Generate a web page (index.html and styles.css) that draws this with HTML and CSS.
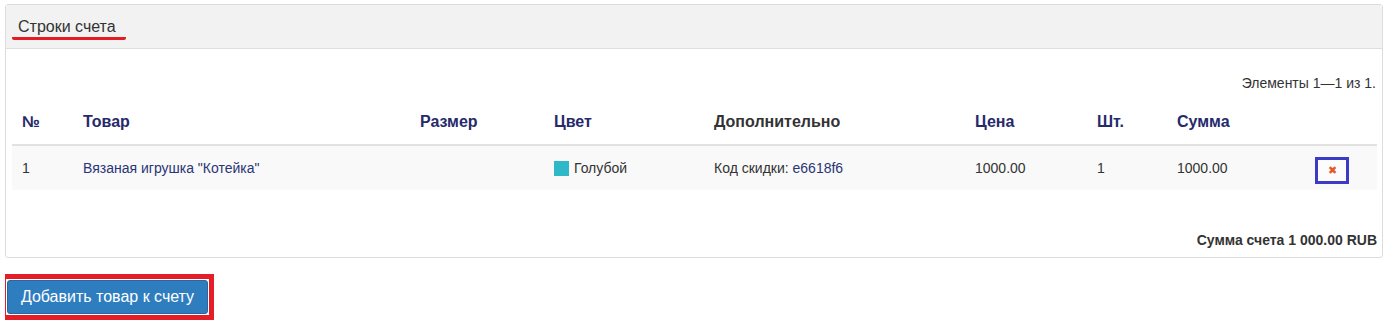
FILE: index.html
```html
<!DOCTYPE html>
<html lang="ru">
<head>
  <meta charset="UTF-8" />
  <title>Строки счета</title>
  <link rel="stylesheet" href="styles.css">
</head>
<body>
  <div class="panel">
    <div class="panel-heading"><span class="panel-title">Строки счета</span></div>
    <div class="panel-body">
      <div class="summary">Элементы 1—1 из 1.</div>
      <table class="grid">
        <colgroup>
          <col style="width:61px"><col style="width:337px"><col style="width:134px"><col style="width:160px">
          <col style="width:261px"><col style="width:122px"><col style="width:80px"><col style="width:120px"><col>
        </colgroup>
        <thead>
          <tr>
            <th>№</th><th>Товар</th><th>Размер</th><th>Цвет</th>
            <th class="plain">Дополнительно</th><th>Цена</th><th>Шт.</th><th>Сумма</th><th></th>
          </tr>
        </thead>
        <tbody>
          <tr>
            <td>1</td>
            <td><a href="#">Вязаная игрушка "Котейка"</a></td>
            <td></td>
            <td><span class="swatch"></span>Голубой</td>
            <td>Код скидки: <a href="#">e6618f6</a></td>
            <td>1000.00</td>
            <td>1</td>
            <td>1000.00</td>
            <td class="action"><span class="del">✖</span></td>
          </tr>
        </tbody>
      </table>
      <div class="total">Сумма счета 1 000.00 RUB</div>
    </div>
  </div>
  <div class="add-frame"><button class="btn-add">Добавить товар к счету</button></div>
</body>
</html>
```

FILE: styles.css
```css
body {
  margin: 4px 14px 0 5px;
  font-family: "Liberation Sans", Arial, sans-serif;
  font-size: 14px;
  color: #333;
  background: #fff;
}
.panel {
  border: 1px solid #dcdcdc;
  border-radius: 3px;
}
.panel-heading {
  height: 44px;
  background: #f2f2f2;
  border-bottom: 1px solid #dedede;
  box-sizing: border-box;
  padding-top: 13px;
}
.panel-title {
  display: inline-block;
  margin-left: 6px;
  padding: 0 10px 1px 6px;
  font-size: 16px;
  line-height: 18px;
  color: #333;
  border-bottom: 3px solid #e31b23;
  border-radius: 2px;
}
.panel-body {
  padding: 25px 5px 8px 6px;
}
.summary {
  text-align: right;
  line-height: 18px;
  padding-right: 1px;
}
.grid {
  width: 100%;
  border-collapse: collapse;
  table-layout: fixed;
}
.grid th {
  text-align: left;
  font-size: 16px;
  font-weight: bold;
  color: #262a6b;
  line-height: 18px;
  padding: 21px 10px 13px;
  border-bottom: 2px solid #e2e2e2;
}
.grid th.plain { color: #333; }
.grid td {
  background: #f9f9f9;
  line-height: 18px;
  padding: 13px 10px;
  white-space: nowrap;
}
.grid a {
  color: #2a3576;
  text-decoration: none;
}
.swatch {
  display: inline-block;
  width: 15px;
  height: 15px;
  background: #2fb8c8;
  vertical-align: -3px;
  margin-right: 5px;
}
.grid td.action {
  text-align: center;
  padding: 4px 0 0;
}
.del {
  display: inline-block;
  width: 28px;
  height: 21px;
  line-height: 21px;
  border: 3px solid #3b3bc8;
  background: #fcfcfc;
  color: #e8572a;
  font-size: 11px;
  text-align: center;
  vertical-align: middle;
}
.total {
  margin-top: 41px;
  text-align: right;
  font-weight: bold;
  line-height: 18px;
}
.add-frame {
  display: inline-block;
  margin: 16px 0 0 -4px;
  border: 5px solid #e41e26;
  padding: 1px;
}
.btn-add {
  display: block;
  width: 201px;
  height: 34px;
  background: #2e7dbf;
  border: 1px solid #28689f;
  border-radius: 3px;
  color: #fff;
  font-family: "Liberation Sans", Arial, sans-serif;
  font-size: 16px;
  cursor: pointer;
}
```
